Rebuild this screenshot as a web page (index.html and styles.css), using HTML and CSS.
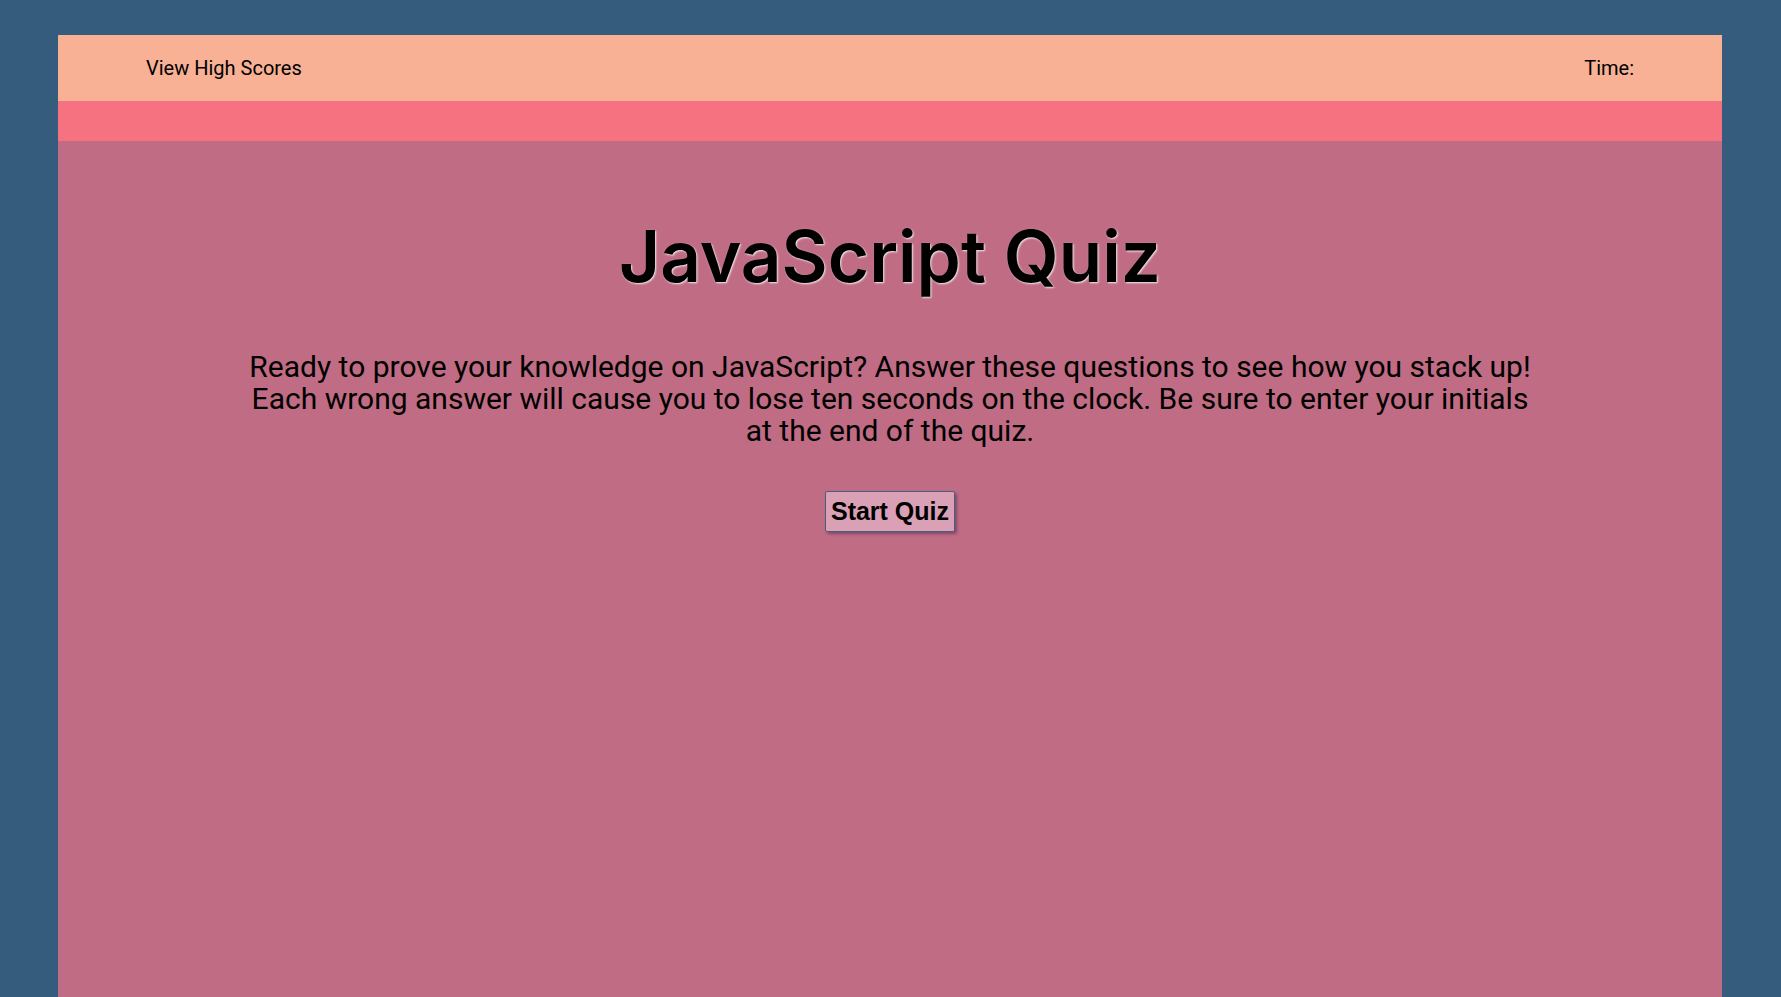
FILE: index.html
```html
<!DOCTYPE html>
<html>
<head>
<meta charset="utf-8">
<link rel="stylesheet" href="styles.css">
</head>
<body>
<div class="wrap">
  <header class="topbar">
    <span class="link">View High Scores</span>
    <span class="time">Time:</span>
  </header>
  <div class="band"></div>
  <main class="main">
    <h1 class="title">JavaScript Quiz</h1>
    <p class="intro">Ready to prove your knowledge on JavaScript? Answer these questions to see how you stack up! Each wrong answer will cause you to lose ten seconds on the clock. Be sure to enter your initials at the end of the quiz.</p>
    <button class="start">Start Quiz</button>
  </main>
</div>
</body>
</html>
```

FILE: styles.css
```css
html, body {
  margin: 0;
  padding: 0;
  background: #355C7D;
  overflow: hidden;
}
.wrap {
  margin: 35px 59px 0 58px;
}
.topbar {
  height: 66px;
  background: #F8B195;
  display: flex;
  justify-content: space-between;
  align-items: center;
  padding: 0 88px;
  font-family: Roboto, "Liberation Sans", sans-serif;
  font-size: 20px;
  color: #000;
}
.band {
  height: 40px;
  background: #F67280;
}
.main {
  background: #C06C84;
  height: 856px;
  display: flex;
  flex-direction: column;
  align-items: center;
  padding-top: 70px;
  box-sizing: border-box;
}
.title {
  margin: 0;
  font-family: Inter, "Noto Sans", sans-serif;
  font-weight: 600;
  font-size: 71px;
  line-height: 90px;
  color: #000;
  text-shadow: 1px 1px 2px #eee;
}
.intro {
  margin: 50px 0 0;
  width: 1300px;
  text-align: center;
  font-family: Roboto, "Liberation Sans", sans-serif;
  font-size: 30px;
  line-height: 32px;
  color: #000;
}
.start {
  margin-top: 44px;
  width: 130px;
  height: 41px;
  padding: 0;
  background: #DAA0B5;
  border: 1px solid #4a5f7e;
  border-radius: 2px;
  box-shadow: 2px 2px 3px rgba(60, 40, 80, 0.5);
  font-family: "Liberation Sans", Arial, sans-serif;
  font-weight: bold;
  font-size: 25px;
  color: #000;
}
```
